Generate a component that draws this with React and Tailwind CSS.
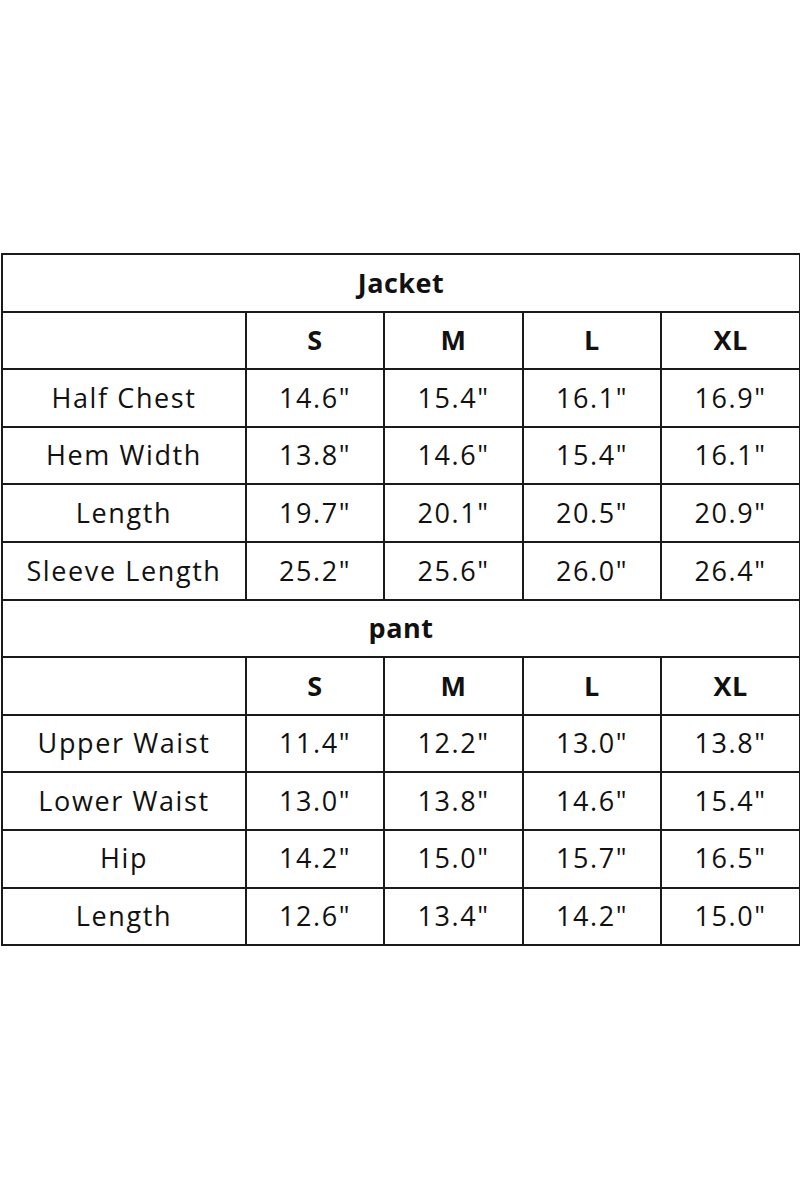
import React from 'react';

const jacket = [
  ['Half Chest', '14.6"', '15.4"', '16.1"', '16.9"'],
  ['Hem Width', '13.8"', '14.6"', '15.4"', '16.1"'],
  ['Length', '19.7"', '20.1"', '20.5"', '20.9"'],
  ['Sleeve Length', '25.2"', '25.6"', '26.0"', '26.4"'],
];

const pant = [
  ['Upper Waist', '11.4"', '12.2"', '13.0"', '13.8"'],
  ['Lower Waist', '13.0"', '13.8"', '14.6"', '15.4"'],
  ['Hip', '14.2"', '15.0"', '15.7"', '16.5"'],
  ['Length', '12.6"', '13.4"', '14.2"', '15.0"'],
];

const sizes = ['S', 'M', 'L', 'XL'];

const cell = 'border-2 border-[#1a1a1a] text-center align-middle p-0';

const Section = ({ title, rows }) => (
  <>
    <tr className="h-[57.6px]">
      <td colSpan={5} className={`${cell} font-bold tracking-[0.5px]`}>{title}</td>
    </tr>
    <tr className="h-[57.6px]">
      <td className={cell}></td>
      {sizes.map((s) => (
        <td key={s} className={`${cell} font-bold tracking-[0.5px]`}>{s}</td>
      ))}
    </tr>
    {rows.map((r, i) => (
      <tr key={i} className="h-[57.6px]">
        {r.map((v, j) => (
          <td key={j} className={`${cell} tracking-[1.6px]`}>{v}</td>
        ))}
      </tr>
    ))}
  </>
);

export default function App() {
  return (
    <div className="w-[800px] h-[1200px] bg-white pt-[253px] pl-[1px] font-['Open_Sans',sans-serif] text-[27px] text-[#111]">
      <table className="w-[798px] table-fixed border-collapse">
        <colgroup>
          <col className="w-[244px]" />
          <col className="w-[138px]" />
          <col className="w-[139px]" />
          <col className="w-[138px]" />
          <col className="w-[139px]" />
        </colgroup>
        <tbody>
          <Section title="Jacket" rows={jacket} />
          <Section title="pant" rows={pant} />
        </tbody>
      </table>
    </div>
  );
}
